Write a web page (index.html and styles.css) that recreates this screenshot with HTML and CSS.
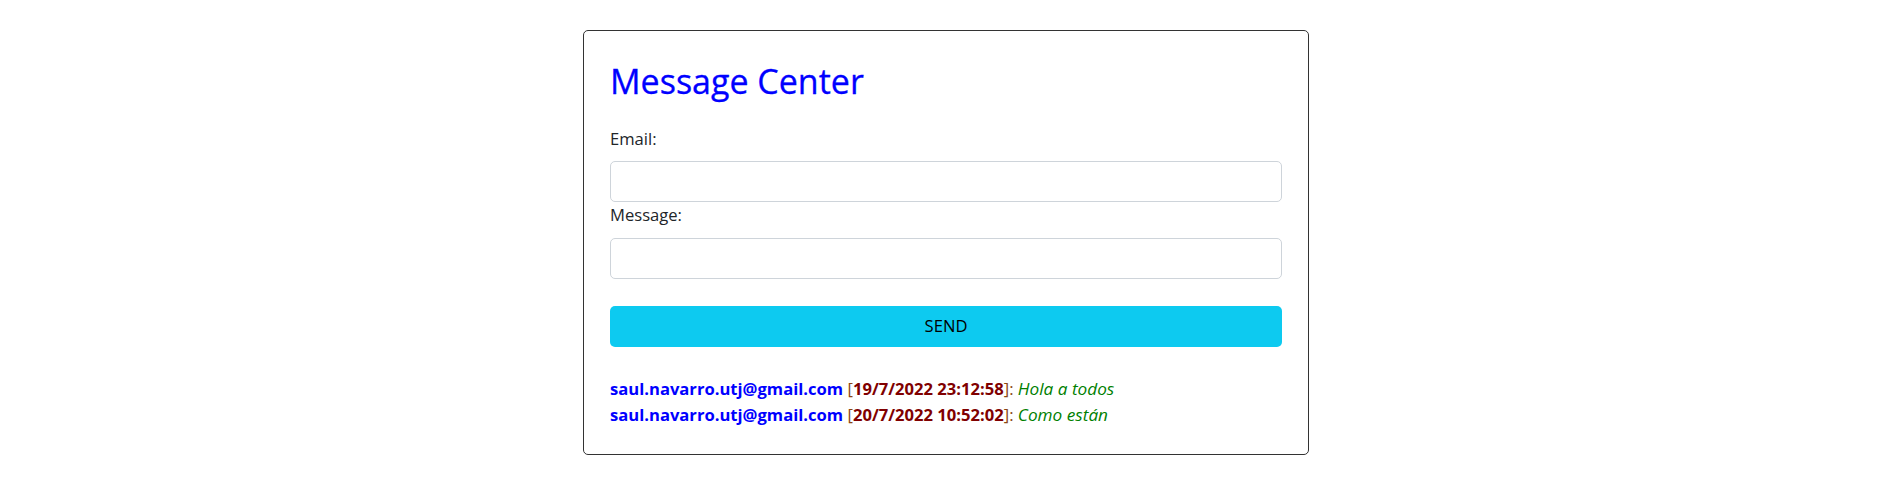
FILE: index.html
```html
<!DOCTYPE html>
<html lang="es">
<head>
<meta charset="utf-8">
<title>Message Center</title>
<link rel="stylesheet" href="styles.css">
</head>
<body>
<main class="card">
  <h2 class="title">Message Center</h2>
  <form class="form">
    <label class="label" for="email">Email:</label>
    <input class="input" id="email" type="email">
    <label class="label" for="msg">Message:</label>
    <input class="input" id="msg" type="text">
    <button class="send" type="button">SEND</button>
  </form>
  <div class="messages">
    <div class="msg"><b class="author">saul.navarro.utj@gmail.com</b> <span class="br">[</span><b class="date">19/7/2022 23:12:58</b><span class="br">]:</span> <i class="text">Hola a todos</i></div>
    <div class="msg"><b class="author">saul.navarro.utj@gmail.com</b> <span class="br">[</span><b class="date">20/7/2022 10:52:02</b><span class="br">]:</span> <i class="text">Como están</i></div>
  </div>
</main>
</body>
</html>
```

FILE: styles.css
```css
* { box-sizing: border-box; }
html, body { margin: 0; padding: 0; background: #fff; }
body {
  font-family: "Open Sans", "Noto Sans", sans-serif;
  font-size: 16.6px;
  line-height: 26.4px;
  color: #212529;
}
.card {
  width: 726px;
  margin: 30px auto 0;
  border: 1px solid #333;
  border-radius: 5px;
  padding: 26px 26px 25px 26px;
}
.title {
  margin: 3px 0 24px;
  font-size: 34px;
  line-height: 42px;
  font-weight: 500;
  color: #0000ff;
  -webkit-text-stroke: 0.3px #0000ff;
}
.form { display: flex; flex-direction: column; }
.label { display: block; margin-bottom: 9px; }
.input {
  height: 41px;
  border: 1px solid #ced4da;
  border-radius: 5px;
  font: inherit;
  padding: 0 12px;
}
.send {
  margin-top: 27px;
  height: 41px;
  border: none;
  border-radius: 5px;
  background: #0dcaf0;
  color: #000;
  font: inherit;
}
.messages { margin-top: 29px; }
.author { color: #0000ff; font-weight: 700; }
.br { color: #8b4513; }
.date { color: #800000; font-weight: 700; }
.text { color: #008000; font-style: italic; font-size: 17.2px; }
```
